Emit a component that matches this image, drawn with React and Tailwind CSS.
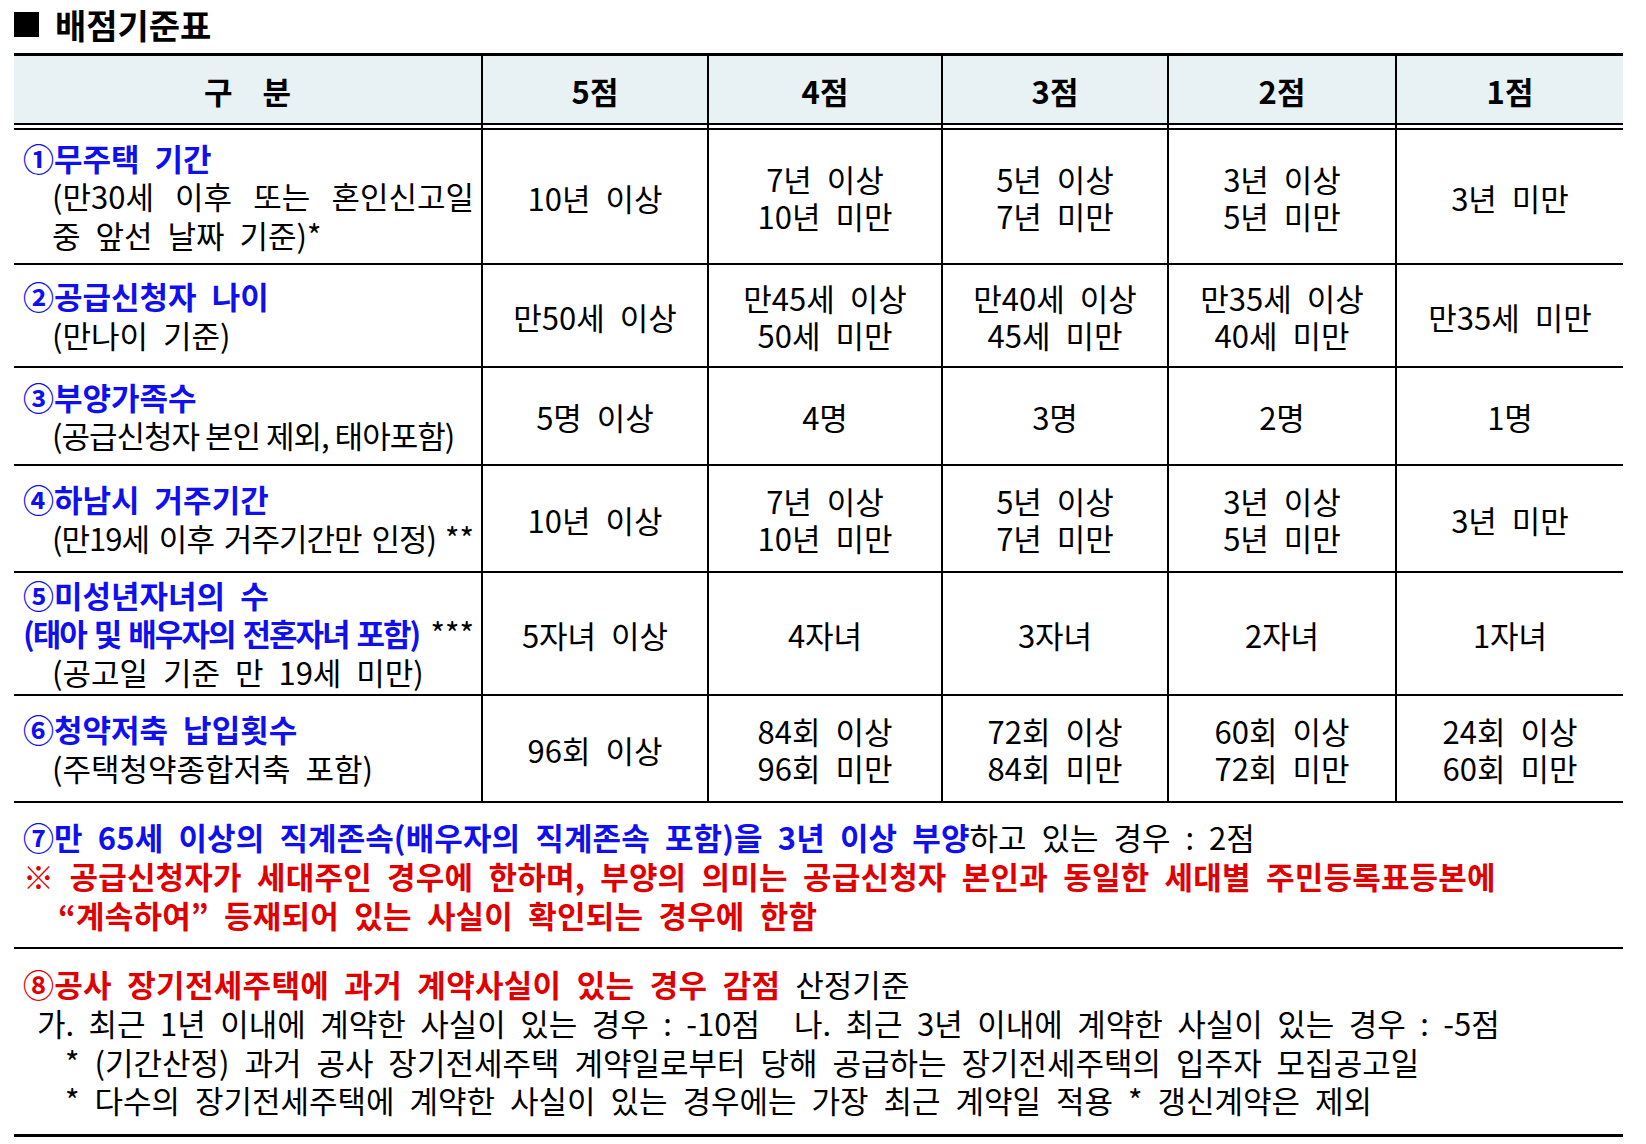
import React from 'react';

const FONT = "font-['Noto_Sans_CJK_KR','Noto_Sans',sans-serif]";

const COLS = 'grid grid-cols-[469px_226px_234px_226px_228px_226px]';

const rows = [
    {
        h: 'h-[137px]',
        left: (
            <>
                <div className="font-bold text-[#1010ee]">①무주택 기간</div>
                <div className="pl-[29px] text-justify [text-align-last:justify]">(만30세 이후 또는 혼인신고일</div>
                <div className="pl-[29px]">중 앞선 날짜 기준)*</div>
            </>
        ),
        cells: ['10년 이상', '7년 이상\n10년 미만', '5년 이상\n7년 미만', '3년 이상\n5년 미만', '3년 미만'],
    },
    {
        h: 'h-[103px]',
        left: (
            <>
                <div className="font-bold text-[#1010ee]">②공급신청자 나이</div>
                <div className="pl-[29px]">(만나이 기준)</div>
            </>
        ),
        cells: ['만50세 이상', '만45세 이상\n50세 미만', '만40세 이상\n45세 미만', '만35세 이상\n40세 미만', '만35세 미만'],
    },
    {
        h: 'h-[98px]',
        left: (
            <>
                <div className="font-bold text-[#1010ee]">③부양가족수</div>
                <div className="pl-[29px] tracking-[-1px] [word-spacing:0px]">(공급신청자 본인 제외, 태아포함)</div>
            </>
        ),
        cells: ['5명 이상', '4명', '3명', '2명', '1명'],
    },
    {
        h: 'h-[107px]',
        left: (
            <>
                <div className="font-bold text-[#1010ee]">④하남시 거주기간</div>
                <div className="pl-[29px] flex justify-between">
                    <span className="tracking-[-1px] [word-spacing:4px]">(만19세 이후 거주기간만 인정)</span>
                    <span>**</span>
                </div>
            </>
        ),
        cells: ['10년 이상', '7년 이상\n10년 미만', '5년 이상\n7년 미만', '3년 이상\n5년 미만', '3년 미만'],
    },
    {
        h: 'h-[123px]',
        left: (
            <>
                <div className="font-bold text-[#1010ee]">⑤미성년자녀의 수</div>
                <div className="flex justify-between">
                    <span className="font-bold text-[#1010ee] tracking-[-2px] [word-spacing:3px]">(태아 및 배우자의 전혼자녀 포함)</span>
                    <span>***</span>
                </div>
                <div className="pl-[29px]">(공고일 기준 만 19세 미만)</div>
            </>
        ),
        cells: ['5자녀 이상', '4자녀', '3자녀', '2자녀', '1자녀'],
    },
    {
        h: 'h-[107px]',
        left: (
            <>
                <div className="font-bold text-[#1010ee]">⑥청약저축 납입횟수</div>
                <div className="pl-[29px]">(주택청약종합저축 포함)</div>
            </>
        ),
        cells: ['96회 이상', '84회 이상\n96회 미만', '72회 이상\n84회 미만', '60회 이상\n72회 미만', '24회 이상\n60회 미만'],
    },
];

const headers = ['5점', '4점', '3점', '2점', '1점'];

const App = () => {
    return (
        <div className={`${FONT} w-[1646px] h-[1144px] bg-white text-black pl-[14px] text-[31px] [word-spacing:8px]`}>
            {/* 제목 */}
            <div className="h-[53px] flex items-center gap-[16px] pb-[4px]">
                <div className="w-[25px] h-[25px] bg-black" />
                <span className="text-[34px] font-bold leading-none [word-spacing:0px]">배점기준표</span>
            </div>

            <div className="w-[1609px]">
                {/* 헤더 */}
                <div className={`${COLS} border-t-[3px] border-black`}>
                    <div className="border-r-2 border-black">
                        <div className="h-[69px] pt-[3px] bg-[#e8f1f4] border-b-2 border-black flex items-center justify-center gap-[30px] font-bold">
                            <span>구</span>
                            <span>분</span>
                        </div>
                        <div className="h-[3px]" />
                    </div>
                    {headers.map((h, i) => (
                        <div key={h} className={i < 4 ? 'border-r-2 border-black' : ''}>
                            <div className="h-[69px] pt-[3px] bg-[#e8f1f4] border-b-2 border-black flex items-center justify-center font-bold [word-spacing:0px]">
                                {h}
                            </div>
                            <div className="h-[3px]" />
                        </div>
                    ))}
                </div>

                {/* 본문 */}
                {rows.map((row, ri) => (
                    <div key={ri} className={`${COLS} ${row.h} border-b-2 border-black ${ri === 0 ? 'border-t-2' : ''}`}>
                        <div className="border-r-2 border-black flex flex-col justify-center pl-[9px] pr-[7px] leading-[38.5px]">
                            {row.left}
                        </div>
                        {row.cells.map((text, ci) => (
                            <div
                                key={ci}
                                className={`flex items-center justify-center pt-[1px] ${ci < 4 ? 'border-r-2 border-black' : ''}`}
                            >
                                <p className="whitespace-pre-line text-center leading-[37px]">{text}</p>
                            </div>
                        ))}
                    </div>
                ))}

                {/* ⑦ 직계존속 */}
                <div className="h-[146px] border-b-2 border-black flex flex-col justify-center pl-[9px] leading-[39px]">
                    <div>
                        <span className="font-bold text-[#1010ee] tracking-[0.1px]">⑦만 65세 이상의 직계존속(배우자의 직계존속 포함)을 3년 이상 부양</span>
                        <span>하고 있는 경우 : 2점</span>
                    </div>
                    <div className="font-bold text-[#e00000] tracking-[0.2px]">※ 공급신청자가 세대주인 경우에 한하며, 부양의 의미는 공급신청자 본인과 동일한 세대별 주민등록표등본에</div>
                    <div className="font-bold text-[#e00000] tracking-[0.2px] pl-[35px]">“계속하여” 등재되어 있는 사실이 확인되는 경우에 한함</div>
                </div>

                {/* ⑧ 감점 */}
                <div className="h-[188px] border-b-[3px] border-black flex flex-col justify-center pl-[9px] pt-[2px] leading-[38.7px]">
                    <div>
                        <span className="font-bold text-[#e00000] tracking-[0.3px]">⑧공사 장기전세주택에 과거 계약사실이 있는 경우 감점</span>
                        <span> 산정기준</span>
                    </div>
                    <div className="pl-[14px] [word-spacing:7.5px]">
                        가. 최근 1년 이내에 계약한 사실이 있는 경우 : -10점<span className="inline-block w-[34px]" />나. 최근 3년 이내에 계약한 사실이 있는 경우 : -5점
                    </div>
                    <div className="pl-[42px]">* (기간산정) 과거 공사 장기전세주택 계약일로부터 당해 공급하는 장기전세주택의 입주자 모집공고일</div>
                    <div className="pl-[42px]">* 다수의 장기전세주택에 계약한 사실이 있는 경우에는 가장 최근 계약일 적용 * 갱신계약은 제외</div>
                </div>
            </div>
        </div>
    );
};

export default App;
